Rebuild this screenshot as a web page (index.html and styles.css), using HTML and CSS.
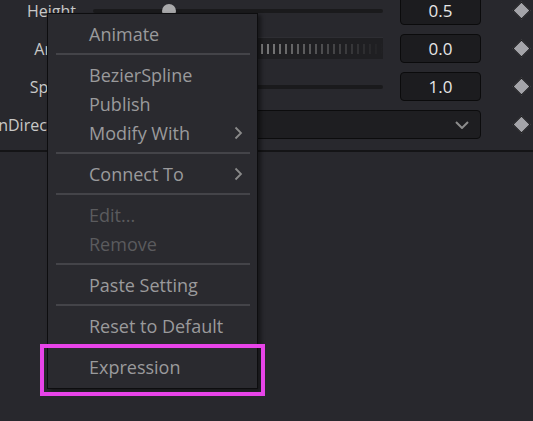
FILE: index.html
```html
<!DOCTYPE html>
<html>
<head>
<meta charset="utf-8">
<link rel="stylesheet" href="styles.css">
</head>
<body>
<div class="panel">
  <div class="row">
    <div class="label"><span>Height</span></div>
    <div class="control"><div class="track"><div class="knob" style="left:69px"></div></div></div>
    <div class="value">0.5</div>
    <div class="key"></div>
  </div>
  <div class="row">
    <div class="label"><span>Angle</span></div>
    <div class="control"><div class="ticks"></div></div>
    <div class="value">0.0</div>
    <div class="key"></div>
  </div>
  <div class="row">
    <div class="label"><span>Speed</span></div>
    <div class="control"><div class="track"></div></div>
    <div class="value">1.0</div>
    <div class="key"></div>
  </div>
  <div class="row">
    <div class="label"><span>PatternDirection</span></div>
    <div class="dropdown">
      <svg class="chev-down" width="14" height="8" viewBox="0 0 14 8"><path d="M1 1 L7 7 L13 1" fill="none" stroke="#8c8c8c" stroke-width="2"/></svg>
    </div>
    <div class="key"></div>
  </div>
</div>

<div class="menu">
  <div class="item">Animate</div>
  <div class="sep"></div>
  <div class="item">BezierSpline</div>
  <div class="item">Publish</div>
  <div class="item">Modify With<svg class="chev" width="9" height="14" viewBox="0 0 9 14"><path d="M1.5 1.5 L7 7 L1.5 12.5" fill="none" stroke="#8a8a8a" stroke-width="1.8"/></svg></div>
  <div class="sep"></div>
  <div class="item">Connect To<svg class="chev" width="9" height="14" viewBox="0 0 9 14"><path d="M1.5 1.5 L7 7 L1.5 12.5" fill="none" stroke="#8a8a8a" stroke-width="1.8"/></svg></div>
  <div class="sep"></div>
  <div class="item disabled">Edit...</div>
  <div class="item disabled">Remove</div>
  <div class="sep"></div>
  <div class="item">Paste Setting</div>
  <div class="sep"></div>
  <div class="item">Reset to Default</div>
  <div class="sep"></div>
  <div class="item">Expression</div>
</div>

<div class="highlight"></div>
</body>
</html>
```

FILE: styles.css
```css
html, body {
  margin: 0;
  padding: 0;
}
body {
  width: 533px;
  height: 421px;
  overflow: hidden;
  background: #28282d;
  font-family: "Open Sans", "Noto Sans", sans-serif;
  position: relative;
}
.panel {
  height: 154px;
  border-bottom: 2px solid #141416;
  display: flex;
  flex-direction: column;
  gap: 9px;
  margin-top: -4px;
  overflow: hidden;
}
.row {
  display: flex;
  align-items: center;
  height: 29px;
  flex: none;
}
.label {
  width: 76px;
  flex: none;
  display: flex;
  justify-content: flex-end;
  white-space: nowrap;
  color: #c8c8c8;
  font-size: 16px;
}
.control {
  width: 290px;
  margin-left: 17px;
  flex: none;
  height: 29px;
  display: flex;
  align-items: center;
}
.track {
  position: relative;
  width: 100%;
  height: 4px;
  border-radius: 2px;
  background: #1a1a1c;
}
.knob {
  position: absolute;
  top: -5px;
  width: 14px;
  height: 14px;
  border-radius: 50%;
  background: #a9a9ab;
}
.ticks {
  width: 100%;
  height: 21px;
  margin-top: -2px;
  background:
    linear-gradient(to right, rgba(31,31,34,0) 0%, rgba(31,31,34,0.1) 50%, rgba(31,31,34,1) 100%),
    repeating-linear-gradient(to right, #9a9a9a 0 2px, transparent 2px 6px) 0 6px / 100% 10px no-repeat,
    #1f1f22;
  border-top: 1px solid #2e2e33;
}
.value {
  width: 81px;
  height: 29px;
  margin-left: 17px;
  flex: none;
  box-sizing: border-box;
  background: #1c1c1f;
  border: 1px solid #0b0b0c;
  border-radius: 4px;
  color: #e6e6e6;
  font-size: 17px;
  display: flex;
  align-items: center;
  justify-content: center;
}
.key {
  width: 11px;
  height: 11px;
  margin-left: 34px;
  flex: none;
  background: #a4a4a9;
  border: 1px solid #101012;
  transform: rotate(45deg);
}
.dropdown {
  width: 388px;
  height: 29px;
  margin-left: 17px;
  flex: none;
  box-sizing: border-box;
  background: #1e1e21;
  border: 1px solid #0c0c0d;
  border-radius: 4px;
  display: flex;
  align-items: center;
  justify-content: flex-end;
  padding-right: 11px;
}
.menu {
  position: absolute;
  left: 47px;
  top: 13px;
  width: 211px;
  box-sizing: border-box;
  background: #2a2a2f;
  border: 1px solid #0d0d0f;
  box-shadow: 3px 2px 4px rgba(0,0,0,0.45);
  padding: 5px 0 7px;
}
.item {
  height: 29px;
  display: flex;
  align-items: center;
  padding-left: 41px;
  padding-right: 14px;
  color: #9a9a9c;
  font-size: 18px;
  white-space: nowrap;
}
.item.disabled {
  color: #5b5b5e;
}
.chev {
  margin-left: auto;
}
.sep {
  height: 2px;
  margin: 5px 7px 5px 8px;
  background: #444449;
}
.highlight {
  position: absolute;
  left: 40px;
  top: 344px;
  width: 225px;
  height: 52px;
  box-sizing: border-box;
  border: 4px solid #e844e9;
}
```
